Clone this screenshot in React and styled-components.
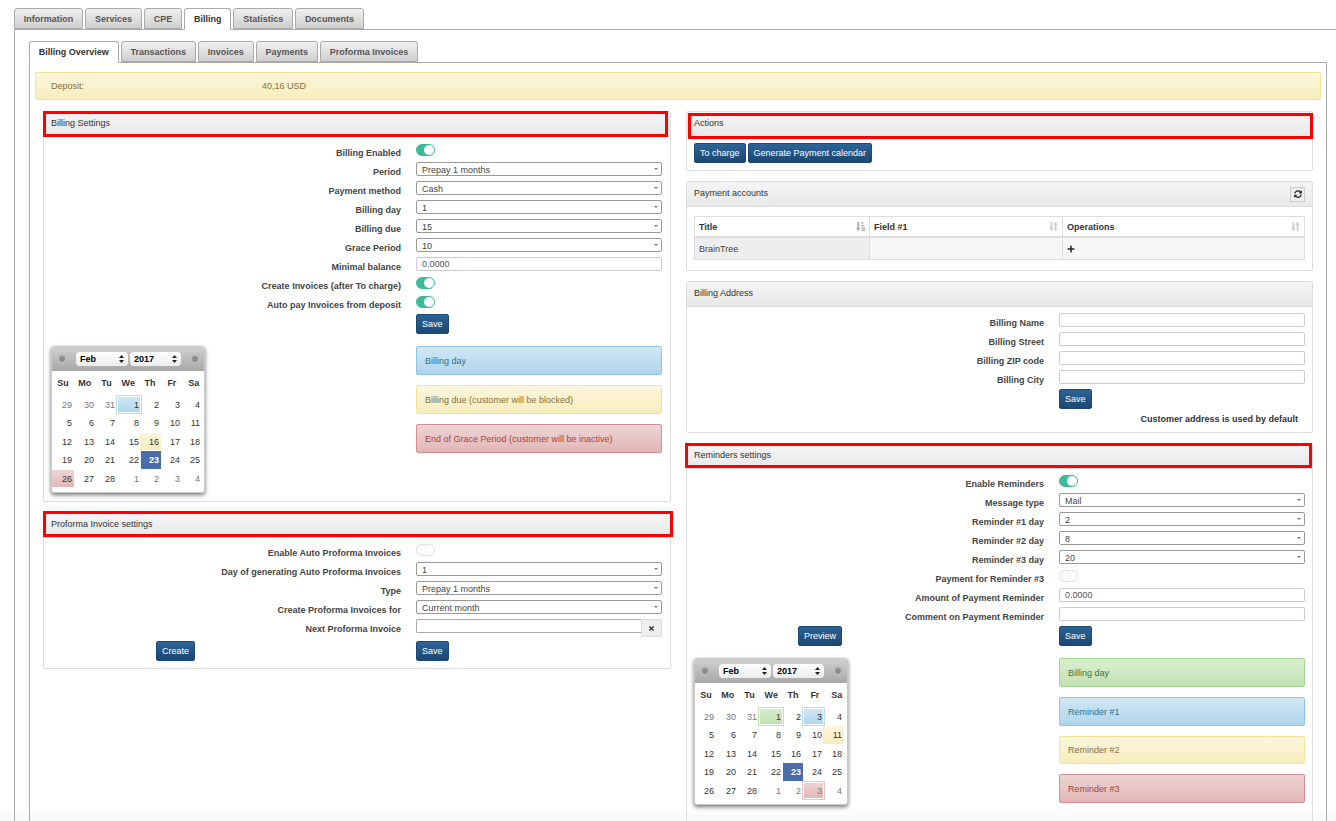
import React from "react";
import styled, { createGlobalStyle } from "styled-components";
import { FaSyncAlt, FaPlus, FaTimes } from "react-icons/fa";

const Global = createGlobalStyle`
  html, body { margin: 0; padding: 0; height: 821px; overflow: hidden; }
  body {
    background: linear-gradient(to bottom, #fff 806px, #f7f7f7 821px);
    font-family: "Liberation Sans", Arial, sans-serif;
    font-size: 9px;
    color: #333;
  }
  * { box-sizing: border-box; }
`;

const Page = styled.div`
  padding: 8px 0 0 14px;
  height: 821px;
  overflow: hidden;
`;
const TabRow = styled.div`
  display: flex;
  gap: 2px;
  height: 21px;
  position: relative;
  z-index: 1;
`;
const Tab = styled.div`
  height: ${(p) => (p.$active ? "22px" : "21px")};
  padding: 0 8.85px;
  display: flex;
  align-items: center;
  padding-bottom: ${(p) => (p.$active ? "1px" : "0")};
  font-weight: bold;
  font-size: 9px;
  border: 1px solid #aaa;
  border-radius: 3px 3px 0 0;
  color: ${(p) => (p.$active ? "#333" : "#555")};
  background: ${(p) => (p.$active ? "#fff" : "linear-gradient(to bottom, #f0f0f0, #cfcfcf)")};
  border-bottom-color: ${(p) => (p.$active ? "#fff" : "#aaa")};
`;
const OuterBox = styled.div`
  border-top: 1px solid #aaa;
  border-left: 1px solid #aaa;
  padding: 11px 9px 0 14px;
  height: 800px;
`;
const InnerBox = styled.div`
  border: 1px solid #aaa;
  border-bottom: 0;
  padding: 9px 5px 0;
  height: 760px;
`;
const Deposit = styled.div`
  height: 28px;
  display: grid;
  grid-template-columns: 211px 1fr;
  align-items: center;
  padding-left: 15px;
  color: #8a6d3b;
  background: linear-gradient(to bottom, #fbf6dd, #f7edbd);
  border: 1px solid #f3e39a;
  border-radius: 2px;
  margin-bottom: 11px;
`;
const Columns = styled.div`
  display: grid;
  grid-template-columns: 628px 627px;
  gap: 15px;
  margin-left: 8px;
  align-items: start;
`;
const Stack = styled.div`
  display: flex;
  flex-direction: column;
  gap: 10px;
`;
const Panel = styled.section`
  position: relative;
  border: 1px solid #ddd;
  border-radius: 2px;
  height: ${(p) => (p.$h ? `${p.$h}px` : "auto")};
`;
const PanelHead = styled.header`
  height: 25px;
  display: flex;
  align-items: center;
  justify-content: space-between;
  padding: 0 7px 2px;
  color: #333;
  background: linear-gradient(to bottom, #f5f5f5, #e8e8e8);
  border-bottom: 1px solid #ddd;
`;
const Highlight = styled.div`
  position: absolute;
  border: 3px solid #f00;
  left: ${(p) => p.$l}px;
  top: ${(p) => p.$t}px;
  width: ${(p) => p.$w}px;
  height: ${(p) => p.$h}px;
  pointer-events: none;
`;
const Body = styled.div`
  padding: ${(p) => p.$pt ?? 6}px ${(p) => p.$pr ?? 7}px 0 0;
`;
const PadBody = styled.div`
  padding: 6px 7px 7px;
  display: flex;
  gap: 2px;
`;
const Row = styled.div`
  display: grid;
  grid-template-columns: 357px 1fr;
  column-gap: 15px;
  height: ${(p) => p.$h ?? 19}px;
`;
const Label = styled.div`
  text-align: right;
  font-weight: bold;
  color: #444;
  line-height: 14px;
  padding-top: 3px;
`;
const SelectBox = styled.div`
  position: relative;
  height: 14px;
  line-height: 13px;
  padding-top: 0.5px;
  border: 1px solid #999;
  border-radius: 2px;
  padding-left: 5px;
  color: #444;
  background: #fff;
  &::after {
    content: "";
    position: absolute;
    right: 3px;
    top: 5px;
    border: 2px solid transparent;
    border-top: 2px solid #777;
    border-bottom: 0;
  }
`;
const TextBox = styled.div`
  flex: 1;
  height: 14px;
  line-height: 12px;
  border: 1px solid #ccc;
  border-radius: 2px;
  padding-left: 5px;
  color: #555;
  background: #fff;
`;
const Group = styled.div`
  display: flex;
`;
const DateBox = styled(TextBox)`
  border-color: #aaa;
  border-right: 0;
  border-radius: 2px 0 0 2px;
`;
const ClearBtn = styled.div`
  width: 21px;
  height: 18px;
  display: flex;
  align-items: center;
  justify-content: center;
  background: #eee;
  border: 1px solid #ddd;
  border-radius: 0 2px 2px 0;
  color: #333;
  font-size: 7px;
`;
const Toggle = styled.div`
  position: relative;
  width: 19px;
  height: 12px;
  margin-top: 1px;
  border-radius: 6px;
  background: ${(p) => (p.$on ? "#3bbb98" : "#fff")};
  border: 1px solid ${(p) => (p.$on ? "#3bbb98" : "#e2e2e2")};
  &::after {
    content: "";
    position: absolute;
    top: 0;
    ${(p) => (p.$on ? "right: 0;" : "left: 0;")}
    width: 10px;
    height: 10px;
    border-radius: 50%;
    background: #fff;
    ${(p) => (p.$on ? "" : "box-shadow: 0 0 1px 0 #bbb;")}
  }
`;
const Button = styled.div`
  height: 20px;
  display: inline-flex;
  align-items: center;
  justify-content: center;
  padding: 0 5px;
  color: #fff;
  border: 1px solid #1d4a75;
  border-radius: 2px;
  background: linear-gradient(to bottom, #2c6496, #1c4773);
`;
const ButtonCell = styled.div`
  display: flex;
  padding-left: ${(p) => p.$left ?? 0}px;
`;
const FormFoot = styled.div`
  display: grid;
  grid-template-columns: 357px 1fr;
  column-gap: 15px;
  margin-top: 12px;
`;
const CalCol = styled.div`
  padding-left: 7px;
`;
const LegendCol = styled.div`
  display: flex;
  flex-direction: column;
  gap: 10px;
`;
const alertTone = {
  blue: { border: "#8ec4e8", text: "#31708f", from: "#d2e7f4", to: "#aed5eb" },
  yellow: { border: "#f3e39a", text: "#8a6d3b", from: "#fbf6dd", to: "#f7edbd" },
  red: { border: "#d98d92", text: "#a94442", from: "#eed4d5", to: "#e2b6b6" },
  green: { border: "#a2d58d", text: "#3c763d", from: "#daeed1", to: "#c2e2b2" },
};
const Alert = styled.div`
  height: ${(p) => p.$h ?? 29}px;
  display: flex;
  align-items: center;
  padding-left: 8px;
  border-radius: 2px;
  border: 1px solid ${(p) => alertTone[p.$tone].border};
  color: ${(p) => alertTone[p.$tone].text};
  background: linear-gradient(to bottom, ${(p) => alertTone[p.$tone].from}, ${(p) => alertTone[p.$tone].to});
`;

/* calendar */
const Cal = styled.div`
  width: 154px;
  height: 147px;
  background: #fff;
  border-radius: 3px;
  border: 1px solid #c8c8c8;
  box-shadow: 0 2px 4px rgba(0, 0, 0, 0.55);
  overflow: hidden;
`;
const CalHead = styled.div`
  height: 24px;
  display: flex;
  align-items: center;
  padding-left: 5px;
  background: linear-gradient(to bottom, #cfcfcf, #a8a8a8);
`;
const CalDot = styled.span`
  width: 10px;
  height: 10px;
  border-radius: 50%;
  background: #8d8d8d;
  border: 2px solid #bcbcbc;
  flex: none;
  margin-left: ${(p) => p.$ml ?? 0}px;
`;
const CalSelect = styled.div`
  position: relative;
  width: ${(p) => p.$w}px;
  height: 14px;
  margin-left: ${(p) => p.$ml}px;
  padding-left: 4px;
  line-height: 14px;
  font-weight: bold;
  color: #000;
  border-radius: 4px;
  background: linear-gradient(to bottom, #fff, #ececec);
`;
const Spin = styled.svg`
  position: absolute;
  right: 4px;
  top: 3px;
  width: 5px;
  height: 8px;
`;
const DayNames = styled.div`
  display: grid;
  grid-template-columns: repeat(7, 21.8px);
  margin-top: 2px;
  height: 20px;
  align-items: center;
  text-align: center;
  font-weight: bold;
  color: #333;
`;
const Dates = styled.div`
  display: grid;
  grid-template-columns: 22px 22px 21px 24px 20px 21px 20px;
  grid-auto-rows: 18.4px;
  margin-top: 3px;
  margin-left: ${(p) => p.$shift}px;
`;
const marks = {
  blue: "linear-gradient(to bottom,#d2e7f4,#aed5eb)",
  yellow: "linear-gradient(to bottom,#fbf6dd,#f7edbd)",
  red: "linear-gradient(to bottom,#eed4d5,#e2b6b6)",
  green: "linear-gradient(to bottom,#d6edcc,#bfe0af)",
};
const borders = { blue: "#b9dcef", yellow: "#f7edbd", red: "#e8c4c6", green: "#bfe3ae" };
const DateCell = styled.div`
  text-align: right;
  padding-right: 2px;
  line-height: 18px;
  color: ${(p) => (p.$sel ? "#fff" : p.$dim ? "#777" : "#333")};
  font-weight: ${(p) => (p.$sel ? "bold" : "normal")};
  ${(p) => (p.$sel ? "background:#4a6ca8; margin-bottom: 1px;" : "")}
  ${(p) => (p.$mark ? `background:${marks[p.$mark]}; margin-bottom: 1px;` : "")}
  ${(p) =>
    p.$mark
      ? p.$plain
        ? `box-shadow: -1px 0 0 0 ${borders[p.$mark]};`
        : `box-shadow: inset 0 0 0 1px #fff, 0 0 0 1px ${borders[p.$mark]};`
      : ""}
`;

const Spinner = () => (
  <Spin viewBox="0 0 5 8">
    <path d="M2.5 0 5 3H0zM2.5 8 0 5h5z" fill="#222" />
  </Spin>
);

const weeks = [
  [29, 30, 31, 1, 2, 3, 4],
  [5, 6, 7, 8, 9, 10, 11],
  [12, 13, 14, 15, 16, 17, 18],
  [19, 20, 21, 22, 23, 24, 25],
  [26, 27, 28, 1, 2, 3, 4],
];
const isDim = (w, d) => (w === 0 && d < 3) || (w === 4 && d > 2);

const Calendar = ({ marked, shift }) => (
  <Cal>
    <CalHead>
      <CalDot />
      <CalSelect $w={52} $ml={9}>Feb<Spinner /></CalSelect>
      <CalSelect $w={51} $ml={2}>2017<Spinner /></CalSelect>
      <CalDot $ml={9} />
    </CalHead>
    <DayNames>
      {["Su", "Mo", "Tu", "We", "Th", "Fr", "Sa"].map((d) => (
        <div key={d}>{d}</div>
      ))}
    </DayNames>
    <Dates $shift={shift}>
      {weeks.map((wk, w) =>
        wk.map((n, d) => {
          const m = marked[`${w}-${d}`];
          return (
            <DateCell
              key={`${w}-${d}`}
              $dim={isDim(w, d)}
              $sel={n === 23}
              $mark={m?.tone}
              $plain={m?.plain}
            >
              {n}
            </DateCell>
          );
        })
      )}
    </Dates>
  </Cal>
);

/* table */
const TableWrap = styled.div`
  padding: 9px 7px 0 7px;
`;
const Table = styled.div`
  border: 1px solid #ddd;
  display: grid;
  grid-template-columns: 174px 193px 1fr;
`;
const Th = styled.div`
  height: 21px;
  display: flex;
  align-items: center;
  justify-content: space-between;
  padding: 0 4px;
  font-weight: bold;
  color: #333;
  border-bottom: 2px solid #ddd;
  border-left: ${(p) => (p.$first ? "0" : "1px solid #ddd")};
`;
const Td = styled.div`
  height: 21px;
  display: flex;
  align-items: center;
  padding: 0 4px;
  color: #444;
  background: ${(p) => (p.$sorted ? "#eee" : "#f6f6f6")};
  border-left: ${(p) => (p.$first ? "0" : "1px solid #ddd")};
`;
const SortSvg = styled.svg`
  width: 9px;
  height: 9px;
  flex: none;
  fill: ${(p) => p.$c ?? "#ccc"};
`;
const SortAmount = () => (
  <SortSvg viewBox="0 0 10 10" $c="#aaa">
    <path d="M1.5 0h2v7H5L2.5 10 0 7h1.5zM6 0h2v2H6zM6 3h2.5v2H6zM6 6h4v1.6H6zM6 8.4h4V10H6z" />
  </SortSvg>
);
const SortBoth = () => (
  <SortSvg viewBox="0 0 10 10">
    <path d="M1.7 0h2v7h1.5L2.7 10 .2 7h1.5zM6.3 10h2V3h1.5L7.3 0 4.8 3h1.5z" />
  </SortSvg>
);
const RefreshBtn = styled.div`
  width: 15px;
  height: 15px;
  margin-top: 2px;
  display: flex;
  align-items: center;
  justify-content: center;
  font-size: 8px;
  color: #222;
  background: #eee;
  border: 1px solid #ccc;
`;
const Note = styled.div`
  text-align: right;
  font-weight: bold;
  color: #333;
  padding: 4px 7px 0 0;
  line-height: 12px;
`;

const SelectRow = ({ label, value }) => (
  <Row>
    <Label>{label}</Label>
    <SelectBox>{value}</SelectBox>
  </Row>
);
const ToggleRow = ({ label, on }) => (
  <Row>
    <Label>{label}</Label>
    <div><Toggle $on={on} /></div>
  </Row>
);
const InputRow = ({ label, value }) => (
  <Row>
    <Label>{label}</Label>
    <Group><TextBox>{value}</TextBox></Group>
  </Row>
);

export default function App() {
  return (
    <Page>
      <Global />
      <TabRow>
        {["Information", "Services", "CPE", "Billing", "Statistics", "Documents"].map((t) => (
          <Tab key={t} $active={t === "Billing"}>{t}</Tab>
        ))}
      </TabRow>
      <OuterBox>
        <TabRow>
          {["Billing Overview", "Transactions", "Invoices", "Payments", "Proforma Invoices"].map((t) => (
            <Tab key={t} $active={t === "Billing Overview"}>{t}</Tab>
          ))}
        </TabRow>
        <InnerBox>
          <Deposit>
            <span>Deposit:</span>
            <span>40,16 USD</span>
          </Deposit>
          <Columns>
            <Stack>
              <Panel $h={391}>
                <PanelHead>Billing Settings</PanelHead>
                <Highlight $l={-1} $t={-1} $w={625} $h={26} />
                <Body $pr={8}>
                  <ToggleRow label="Billing Enabled" on />
                  <SelectRow label="Period" value="Prepay 1 months" />
                  <SelectRow label="Payment method" value="Cash" />
                  <SelectRow label="Billing day" value="1" />
                  <SelectRow label="Billing due" value="15" />
                  <SelectRow label="Grace Period" value="10" />
                  <InputRow label="Minimal balance" value="0.0000" />
                  <ToggleRow label="Create Invoices (after To charge)" on />
                  <ToggleRow label="Auto pay Invoices from deposit" on />
                  <Row $h={20}>
                    <div />
                    <ButtonCell><Button>Save</Button></ButtonCell>
                  </Row>
                  <FormFoot>
                    <CalCol>
                      <Calendar
                        shift={0}
                        marked={{
                          "0-3": { tone: "blue" },
                          "2-4": { tone: "yellow", plain: true },
                          "4-0": { tone: "red", plain: true },
                        }}
                      />
                    </CalCol>
                    <LegendCol>
                      <Alert $tone="blue">Billing day</Alert>
                      <Alert $tone="yellow">Billing due (customer will be blocked)</Alert>
                      <Alert $tone="red">End of Grace Period (customer will be inactive)</Alert>
                    </LegendCol>
                  </FormFoot>
                </Body>
              </Panel>
              <Panel $h={157}>
                <PanelHead>Proforma Invoice settings</PanelHead>
                <Highlight $l={-1} $t={-2} $w={630} $h={26} />
                <Body $pt={5} $pr={8}>
                  <ToggleRow label="Enable Auto Proforma Invoices" />
                  <SelectRow label="Day of generating Auto Proforma Invoices" value="1" />
                  <SelectRow label="Type" value="Prepay 1 months" />
                  <SelectRow label="Create Proforma Invoices for" value="Current month" />
                  <Row $h={22}>
                    <Label>Next Proforma Invoice</Label>
                    <Group>
                      <DateBox />
                      <ClearBtn><FaTimes /></ClearBtn>
                    </Group>
                  </Row>
                  <Row $h={20}>
                    <ButtonCell $left={112}><Button>Create</Button></ButtonCell>
                    <ButtonCell><Button>Save</Button></ButtonCell>
                  </Row>
                </Body>
              </Panel>
            </Stack>
            <Stack>
              <Panel $h={60}>
                <PanelHead>Actions</PanelHead>
                <Highlight $l={1} $t={1} $w={625} $h={26} />
                <PadBody>
                  <Button>To charge</Button>
                  <Button>Generate Payment calendar</Button>
                </PadBody>
              </Panel>
              <Panel $h={90}>
                <PanelHead>
                  Payment accounts
                  <RefreshBtn><FaSyncAlt /></RefreshBtn>
                </PanelHead>
                <TableWrap>
                  <Table>
                    <Th $first>Title<SortAmount /></Th>
                    <Th>Field #1<SortBoth /></Th>
                    <Th>Operations<SortBoth /></Th>
                    <Td $first $sorted>BrainTree</Td>
                    <Td />
                    <Td><FaPlus size={8} color="#222" /></Td>
                  </Table>
                </TableWrap>
              </Panel>
              <Panel $h={152}>
                <PanelHead>Billing Address</PanelHead>
                <Body>
                  <InputRow label="Billing Name" />
                  <InputRow label="Billing Street" />
                  <InputRow label="Billing ZIP code" />
                  <InputRow label="Billing City" />
                  <Row $h={20}>
                    <div />
                    <ButtonCell><Button>Save</Button></ButtonCell>
                  </Row>
                  <Note>Customer address is used by default</Note>
                </Body>
              </Panel>
              <Panel $h={380}>
                <PanelHead>Reminders settings</PanelHead>
                <Highlight $l={-2} $t={-1} $w={627} $h={25} />
                <Body $pt={5}>
                  <ToggleRow label="Enable Reminders" on />
                  <SelectRow label="Message type" value="Mail" />
                  <SelectRow label="Reminder #1 day" value="2" />
                  <SelectRow label="Reminder #2 day" value="8" />
                  <SelectRow label="Reminder #3 day" value="20" />
                  <ToggleRow label="Payment for Reminder #3" />
                  <InputRow label="Amount of Payment Reminder" value="0.0000" />
                  <InputRow label="Comment on Payment Reminder" />
                  <Row $h={20}>
                    <ButtonCell $left={111}><Button>Preview</Button></ButtonCell>
                    <ButtonCell><Button>Save</Button></ButtonCell>
                  </Row>
                  <FormFoot>
                    <CalCol>
                      <Calendar
                        shift={-1}
                        marked={{
                          "0-3": { tone: "green" },
                          "0-5": { tone: "blue" },
                          "1-6": { tone: "yellow", plain: true },
                          "4-5": { tone: "red" },
                        }}
                      />
                    </CalCol>
                    <LegendCol>
                      <Alert $tone="green">Billing day</Alert>
                      <Alert $tone="blue">Reminder #1</Alert>
                      <Alert $tone="yellow" $h={28}>Reminder #2</Alert>
                      <Alert $tone="red">Reminder #3</Alert>
                    </LegendCol>
                  </FormFoot>
                </Body>
              </Panel>
            </Stack>
          </Columns>
        </InnerBox>
      </OuterBox>
    </Page>
  );
}
